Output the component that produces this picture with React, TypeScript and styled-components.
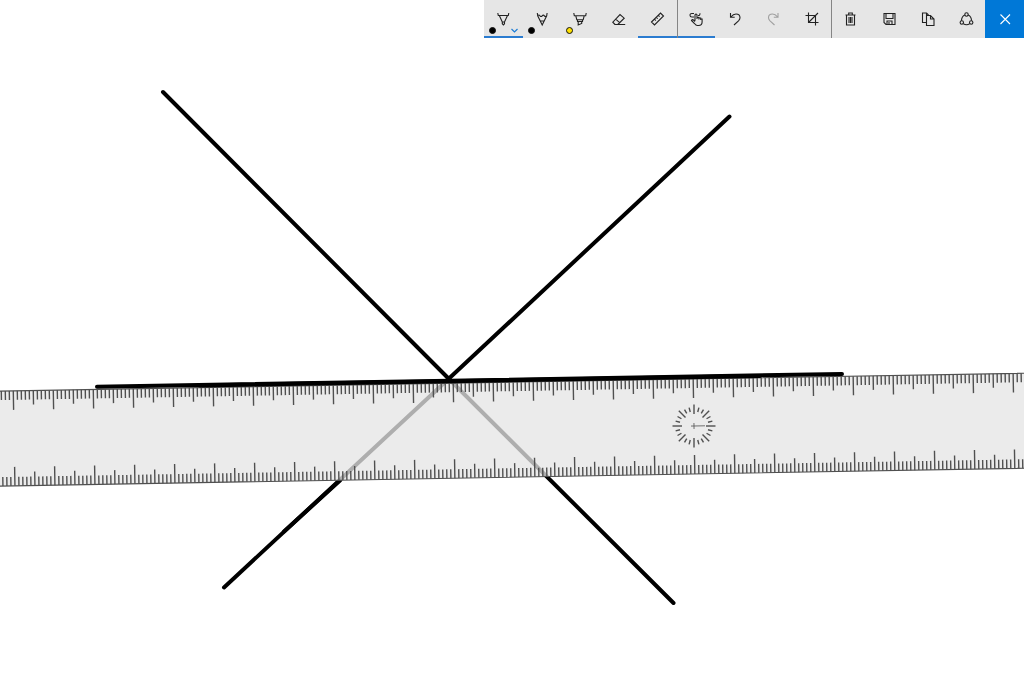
import React from 'react';
import styled, { createGlobalStyle, css } from 'styled-components';

const GlobalStyle = createGlobalStyle`
  *, *::before, *::after { box-sizing: border-box; }
  body { margin: 0; background: #ffffff; font-family: "Open Sans", "Liberation Sans", sans-serif; }
`;

const Workspace = styled.main`
  display: grid;
  grid-template-rows: auto 1fr;
  min-height: 100vh;
  overflow: hidden;
`;

const Canvas = styled.svg`
  grid-area: 1 / 1 / 3 / 2;
  display: block;
  width: 100%;
  height: 100vh;
`;

const Toolbar = styled.div`
  grid-area: 1 / 1 / 2 / 2;
  justify-self: end;
  z-index: 1;
  display: grid;
  grid-template-columns: repeat(14, 1fr);
  width: 540px;
  max-width: 100%;
  height: 38px;
  background: #e6e6e6;
`;

const ToolButton = styled.button<{ $active?: boolean; $divider?: boolean; $close?: boolean }>`
  position: relative;
  display: flex;
  align-items: center;
  justify-content: center;
  padding: 0;
  border: 0;
  border-radius: 0;
  background: ${(p) => (p.$close ? '#0078d7' : 'transparent')};
  color: ${(p) => (p.$close ? '#ffffff' : '#222222')};
  cursor: pointer;

  &:disabled { color: #a0a0a0; cursor: default; }

  ${(p) => p.$active && css`box-shadow: inset 0 -2px #2b7cd0;`}

  ${(p) => p.$divider && css`
    &::before {
      content: "";
      position: absolute;
      left: 0;
      top: 0;
      bottom: 0;
      width: 1px;
      background: #858585;
    }
  `}
`;

const Glyph = styled.svg`
  display: block;
  width: 16px;
  height: 16px;
  fill: none;
  stroke: currentColor;
  stroke-width: 1.1;
`;

const Swatch = styled.span<{ $color: string }>`
  position: absolute;
  left: 5px;
  bottom: 4px;
  width: 7px;
  height: 7px;
  border: 1px solid #111111;
  border-radius: 50%;
  background: ${(p) => p.$color};
`;

const Chevron = styled.svg`
  position: absolute;
  right: 5px;
  bottom: 5px;
  width: 7px;
  height: 5px;
  fill: none;
  stroke: #1c7cd5;
  stroke-width: 1.2;
`;

interface Tool {
  label: string;
  icon: React.ReactNode;
  swatch?: string;
  menu?: boolean;
  active?: boolean;
  divider?: boolean;
  disabled?: boolean;
  close?: boolean;
}

const tools: Tool[] = [
  {
    label: 'Ballpoint pen', swatch: '#000000', menu: true, active: true,
    icon: <path d="M2.800 2l.5 2.500h10l.5-2.500M4.300 4.500 7.300 11h2.200l3-6.500M7.300 11v1.700l1.100 1.300 1.100-1.300V11" />,
  },
  {
    label: 'Pencil', swatch: '#000000',
    icon: <path d="M3.300 2l.4 2.800L8.200 14l4.500-9.200.4-2.800M3.700 4.800q1.200-1.500 2.300 0 1.100 1.300 2.200 0 1.100-1.300 2.200 0 1.100 1.300 2.300 0M6.300 10h3.800" />,
  },
  {
    label: 'Highlighter', swatch: '#ffe100',
    icon: <path d="M1.800 2l.5 2.800h11.400l.5-2.800M3.800 4.800 4.800 8.700h6.400l1-3.900M5.500 8.700v1.800h5V8.700M6.200 10.500v3.500l3.500-1.600v-1.900" />,
  },
  {
    label: 'Eraser',
    icon: <path d="M4 13.500 1.800 11.200 9 3.500l4.200 3.700-6.400 6.300M4.700 8.200l4.200 3.700M3.700 13.500h10.500" />,
  },
  {
    label: 'Ruler', active: true,
    icon: <path d="M1.500 11 10.500 2l3 3-9 9zM4.500 8.200l1.300 1.300M6.400 6.300l1.300 1.300M8.300 4.400l1.300 1.300" />,
  },
  {
    label: 'Touch writing', active: true, divider: true,
    icon: <path d="M7 9.800V4q0-1 1-1t1 1v4M9 6.500h1.900v2M10.900 7h1.800v2M12.700 8h1.400v3q0 3.500-3.500 3.500H9.300Q8 14.500 6.500 12.500L3.500 9.500q.6-1.500 2-.5L7 10.500M6 6H4Q2 6 2 4.200T4 2.500h2M10 4.500q2 .5 2-2.200" />,
  },
  {
    label: 'Undo',
    icon: <path d="M3.500 2v4.200h4.200M3.800 6Q6.300 3 9 3q4 0 4 3.700 0 1.600-1.500 3.100L7 14" />,
  },
  {
    label: 'Redo', disabled: true,
    icon: <path d="M13 2v4.200H8.800M12.700 6Q10.200 3 7.500 3q-4 0-4 3.700 0 1.600 1.500 3.100L9.500 14" />,
  },
  {
    label: 'Crop',
    icon: <path d="M4.500 1.500v10h10M1.500 4.500h10v10M4.500 11.500l9.500-9.500" />,
  },
  {
    label: 'Clear all', divider: true,
    icon: <path d="M3.500 4h10M6.700 4V2h3.600v2M4.500 4v10h8V4M7 6v6M8.500 6v6M10 6v6" />,
  },
  {
    label: 'Save as',
    icon: <path d="M3 2.500h11v11H5l-2-2zM5 2.500v5h7v-5M6 13.500v-3.500h5v3.500M8 11v2" />,
  },
  {
    label: 'Copy',
    icon: <path d="M6 11.500H2.500v-9.500h4l2 2M6.500 4.500h4l3.500 3.500v6.500H6.500zM10.500 4.500v3.500h3.500M6.500 2v2.500" />,
  },
  {
    label: 'Share',
    icon: (
      <>
        <circle cx="8.500" cy="3.500" r="1.700" />
        <circle cx="3.800" cy="11.500" r="1.700" />
        <circle cx="13.200" cy="11.500" r="1.700" />
        <path d="M6.800 4Q3.500 5.500 3.500 9.800M10.200 4q3.300 1.500 3.300 5.800M5.200 12.600q3.300 2.400 6.600 0" />
      </>
    ),
  },
  { label: 'Close', close: true, icon: <path d="m3.500 3.500 9.500 9.500M13 3.500 3.500 13" /> },
];

const TICK_STEP = 4;
const tickLength = (i: number) => (i % 10 === 0 ? 19 : i % 5 === 0 ? 14 : 9);
const ticks = Array.from({ length: 401 }, (_, i) => i - 250);
const dialMarks = Array.from({ length: 24 }, (_, i) => i * 15);

const topTicks = ticks.map((i) => `M${i * TICK_STEP} -47v${tickLength(i)}`).join('');
const bottomTicks = ticks.map((i) => `M${i * TICK_STEP} 48v${-tickLength(i)}`).join('');

function Ruler() {
  return (
    <g transform="translate(694 426) rotate(-1)" stroke="#505050" strokeWidth="1.4" fill="none">
      <rect x="-1000" y="-47" width="1600" height="95" fill="#e5e5e5" fillOpacity="0.76" strokeWidth="1.1" />
      <path d={topTicks} />
      <path d={bottomTicks} />
      <g transform="rotate(1)">
        {dialMarks.map((a) => (
          <path key={a} d={a % 45 === 0 ? 'M0 -21.500V-12' : 'M0 -19V-14.500'} transform={`rotate(${a})`} />
        ))}
      </g>
      <path d="M-3 0H11M0 -3V3" strokeWidth="0.8" />
    </g>
  );
}

export default function App() {
  return (
    <>
      <GlobalStyle />
      <Workspace>
        <Canvas viewBox="0 0 1024 683" preserveAspectRatio="xMaxYMin slice" role="img" aria-label="Ink sketch with ruler">
          <g fill="none" stroke="#000000" strokeWidth="4" strokeLinecap="round" strokeLinejoin="round">
            <path d="M163 92 449 379 673.500 603" />
            <path d="M729.500 116.500 449 378.500 224 587.500" />
            <path d="M340 480.500 284 531.500" />
          </g>
          <Ruler />
          <g fill="none" stroke="#000000" strokeWidth="4" strokeLinecap="round">
            <path d="M97 386.700 842 374" />
            <path d="M200 385.500 760 375.900" />
          </g>
        </Canvas>
        <Toolbar role="toolbar" aria-label="Sketch tools">
          {tools.map((t) => (
            <ToolButton
              key={t.label}
              type="button"
              aria-label={t.label}
              disabled={t.disabled}
              $active={t.active}
              $divider={t.divider}
              $close={t.close}
            >
              <Glyph viewBox="0 0 16 16" aria-hidden="true">{t.icon}</Glyph>
              {t.swatch && <Swatch $color={t.swatch} />}
              {t.menu && <Chevron viewBox="0 0 7 5" aria-hidden="true"><path d="m.5 1 3 3 3-3" /></Chevron>}
            </ToolButton>
          ))}
        </Toolbar>
      </Workspace>
    </>
  );
}
